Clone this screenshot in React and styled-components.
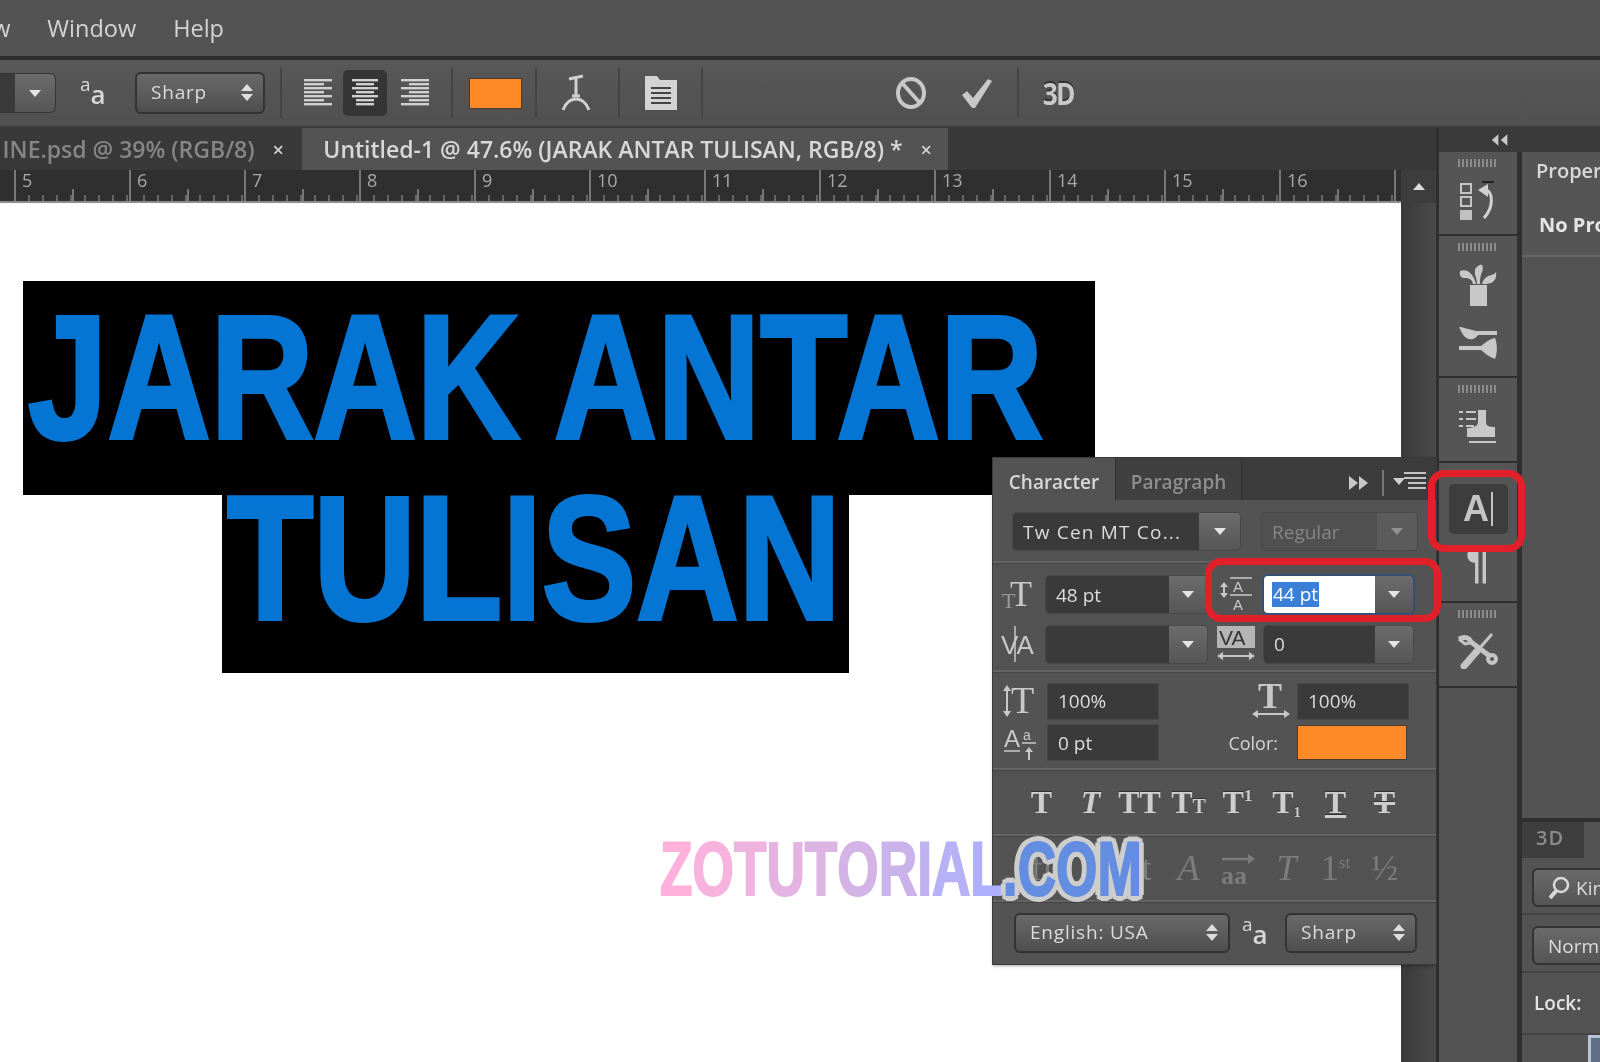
import React from 'react'
import styled, { createGlobalStyle } from 'styled-components'

const UI = `"Open Sans", "Noto Sans", sans-serif`
const SERIF = `"Liberation Serif", serif`

const Global = createGlobalStyle`
  html, body {
    margin: 0;
    padding: 0;
    background: #535353;
  }
  * { box-sizing: border-box; }
`

const Page = styled.div`
  position: relative;
  width: 1600px;
  height: 1062px;
  overflow: hidden;
  display: flex;
  flex-direction: column;
  background: #535353;
  font-family: ${UI};
  color: #d8d8d8;
  filter: blur(0.45px);
`

const MenuBar = styled.div`
  height: 60px;
  flex: none;
  display: flex;
  align-items: center;
  gap: 37px;
  padding: 0 0 1px 0;
  margin-left: -41px;
  border-bottom: 4px solid #2c2c2c;
  font-size: 23.5px;
  color: #d4d4d4;
`

const OptionsBar = styled.div`
  height: 68px;
  flex: none;
  display: flex;
  align-items: center;
  background: linear-gradient(#585858, #505050);
  border-bottom: 2px solid #3c3c3c;
`

const OptDivider = styled.div`
  width: 2px;
  height: 50px;
  flex: none;
  background: #444;
  margin-left: ${p => p.$ml || 0}px;
`

const FontStub = styled.div`
  width: 55px;
  height: 38px;
  flex: none;
  display: flex;
  border-radius: 0 5px 5px 0;
  overflow: hidden;
  box-shadow: 0 0 0 1px #363636;
  background: #3a3a3a;
  padding-left: 15px;
`

const Select = styled.div`
  width: ${p => p.$w}px;
  height: ${p => p.$h || 40}px;
  flex: none;
  margin-left: ${p => p.$ml || 0}px;
  display: flex;
  align-items: center;
  justify-content: space-between;
  padding: 0 10px 2px 14px;
  font-size: 19px;
  letter-spacing: 0.8px;
  color: #dcdcdc;
  border: 2px solid #333;
  border-radius: 6px;
  background: linear-gradient(#696969, #4f4f4f);
  white-space: nowrap;
  overflow: hidden;
`

const UpDown = styled.span`
  display: flex;
  flex-direction: column;
  gap: 3px;
  flex: none;
  &::before, &::after {
    content: '';
    border-left: 6px solid transparent;
    border-right: 6px solid transparent;
  }
  &::before { border-bottom: 7px solid #ddd; }
  &::after { border-top: 7px solid #ddd; }
`

const AaIcon = styled.span`
  flex: none;
  width: ${p => p.$w || 30}px;
  margin-left: ${p => p.$ml || 0}px;
  display: flex;
  font-family: ${UI};
  color: #d8d8d8;
  line-height: 1;
  span:first-child { font-size: 19px; margin-top: -4px; }
  span:last-child { font-size: 26px; margin-top: 2px; font-weight: 600; }
`

const AlignBtn = styled.div`
  width: 44px;
  height: 46px;
  flex: none;
  margin-left: ${p => p.$ml || 0}px;
  display: flex;
  align-items: center;
  justify-content: center;
  border-radius: 5px;
  background: ${p => (p.$on ? '#353535' : 'transparent')};
`

const Swatch = styled.div`
  width: ${p => p.$w}px;
  height: ${p => p.$h}px;
  flex: none;
  margin-left: ${p => p.$ml || 0}px;
  background: #ff8a27;
  box-shadow: 0 0 0 1px #4a3a2c;
`

const OptIcon = styled.div`
  flex: none;
  display: flex;
  margin-left: ${p => p.$ml || 0}px;
`

const ThreeD = styled.span`
  flex: none;
  margin-left: 21px;
  font-size: 31px;
  font-weight: 700;
  letter-spacing: -2px;
  color: #c8c8c8;
  text-shadow: 0 -2px 0 #333;
  transform: scaleX(0.85);
`

const Workspace = styled.div`
  flex: 1;
  min-height: 0;
  display: flex;
`

const Main = styled.div`
  width: 1439px;
  flex: none;
  display: flex;
  flex-direction: column;
  border-right: 3px solid #2f2f2f;
`

const TabBar = styled.div`
  height: 42px;
  flex: none;
  display: flex;
  background: #393939;
  font-size: 23px;
  font-weight: 600;
`

const Tab = styled.div`
  width: ${p => p.$w}px;
  flex: none;
  display: flex;
  align-items: center;
  justify-content: flex-end;
  gap: 18px;
  padding-right: ${p => p.$pr}px;
  overflow: hidden;
  white-space: nowrap;
  background: ${p => (p.$on ? '#535353' : '#393939')};
  color: ${p => (p.$on ? '#d8d8d8' : '#868686')};
`

const TabClose = styled.span`
  font-size: 20px;
  font-weight: 600;
  color: #d0d0d0;
`

const RulerRow = styled.div`
  height: 33px;
  flex: none;
  display: flex;
`

const Ruler = styled.div`
  flex: 1;
  display: flex;
  padding-left: 14px;
  background: #2f2f2f;
  overflow: hidden;
  border-bottom: 2px solid #8c8c8c;
`

const RulerCell = styled.div`
  width: 115px;
  flex: none;
  border-left: 2px solid #777;
  padding-left: 6px;
  font-size: 18px;
  line-height: 20px;
  color: #a8a8a8;
  background:
    linear-gradient(90deg, transparent 56px, #777 56px, #777 58px, transparent 58px) bottom left / 115px 12px no-repeat,
    repeating-linear-gradient(90deg, transparent 0 12px, #666 12px 14px) bottom left / 115px 6px no-repeat;
`

const ScrollHead = styled.div`
  width: 35px;
  flex: none;
  display: flex;
  justify-content: center;
  padding-top: 13px;
  background: #3d3d3d;
  &::before {
    content: '';
    height: 0;
    border-left: 6px solid transparent;
    border-right: 6px solid transparent;
    border-bottom: 7px solid #ddd;
  }
`

const CanvasRow = styled.div`
  flex: 1;
  min-height: 0;
  display: flex;
`

const Canvas = styled.div`
  position: relative;
  flex: 1;
  background: #fff;
`

const ScrollTrack = styled.div`
  width: 35px;
  flex: none;
  background: linear-gradient(90deg, #3a3a3a, #4a4a4a);
`

const Artwork = styled.div`
  position: absolute;
  left: 23px;
  top: 78px;
  display: flex;
  flex-direction: column;
  align-items: flex-start;
`

const ArtLine = styled.div`
  width: ${p => p.$w}px;
  height: ${p => p.$h}px;
  margin-left: ${p => p.$ml || 0}px;
  padding-left: ${p => p.$pl}px;
  background: #000;
  white-space: nowrap;
`

const ArtText = styled.span`
  display: inline-block;
  font-family: "Liberation Sans", sans-serif;
  font-weight: 700;
  font-size: 176px;
  line-height: ${p => p.$lh}px;
  color: #0575d4;
  -webkit-text-stroke: 4px #0575d4;
  transform: scaleX(${p => p.$sx});
  transform-origin: left center;
`

const Dock = styled.div`
  flex: 1;
  min-width: 0;
  display: flex;
  flex-direction: column;
  background: #2f2f2f;
`

const DockHead = styled.div`
  height: 24px;
  flex: none;
  display: flex;
  justify-content: flex-start;
  align-items: center;
  padding-left: 52px;
  background: #3a3a3a;
`

const DockBody = styled.div`
  flex: 1;
  min-height: 0;
  display: flex;
`

const IconColumn = styled.div`
  width: 78px;
  flex: none;
  display: flex;
  flex-direction: column;
  gap: 2px;
  background: #535353;
`

const IconGroup = styled.div`
  height: ${p => p.$h}px;
  flex: none;
  display: flex;
  flex-direction: column;
  align-items: center;
  padding-top: 7px;
  background: #555;
  box-shadow: 0 2px 0 #2f2f2f;
`

const Grip = styled.div`
  width: 40px;
  height: 8px;
  flex: none;
  margin-bottom: ${p => p.$mb}px;
  background: repeating-linear-gradient(90deg, #8a8a8a 0 2px, transparent 2px 4px);
`

const DockGlyph = styled.div`
  flex: none;
  display: flex;
  margin-top: ${p => p.$mt || 0}px;
`

const ActiveBtn = styled.div`
  width: 59px;
  height: 50px;
  flex: none;
  margin-top: 14px;
  display: flex;
  align-items: center;
  justify-content: center;
  gap: 2px;
  border-radius: 5px;
  background: #3d3d3d;
  color: #c4c4c4;
  font-family: "Liberation Sans", sans-serif;
  font-size: 36px;
  font-weight: 700;
  line-height: 1;
  i {
    display: block;
    width: 2px;
    height: 34px;
    background: #c4c4c4;
  }
`

const Pilcrow = styled.div`
  flex: none;
  margin-top: 7px;
  font-family: "Liberation Sans", sans-serif;
  font-weight: 700;
  font-size: 44px;
  line-height: 44px;
  color: #c8c8c8;
`

const Stack = styled.div`
  margin-left: 5px;
  flex: 1;
  min-width: 0;
  display: flex;
  flex-direction: column;
  overflow: hidden;
  background: #2f2f2f;
`

const PropHead = styled.div`
  height: 105px;
  flex: none;
  padding: 5px 0 0 14px;
  border-bottom: 2px solid #666;
  background: #555;
  white-space: nowrap;
  font-size: 20px;
  font-weight: 600;
  color: #d8d8d8;
  strong {
    display: block;
    margin: 27px 0 0 3px;
    font-weight: 700;
    color: #e4e4e4;
  }
`

const PropBody = styled.div`
  height: 565px;
  flex: none;
  background: #535353;
  border-bottom: 4px solid #2f2f2f;
`

const SmallTabs = styled.div`
  height: 36px;
  flex: none;
  display: flex;
  background: #535353;
  font-size: 20px;
  font-weight: 600;
  color: #8c8c8c;
`

const SmallTab = styled.div`
  width: 62px;
  flex: none;
  padding: 2px 0 0 14px;
  background: #3e3e3e;
  letter-spacing: 1px;
`

const StackRow = styled.div`
  height: ${p => p.$h}px;
  flex: none;
  display: flex;
  padding: ${p => p.$pt || 0}px 0 0 10px;
  background: #535353;
  border-bottom: 2px solid #444;
  font-size: 19px;
  white-space: nowrap;
`

const StackSelect = styled.div`
  width: 90px;
  height: 39px;
  flex: none;
  display: flex;
  align-items: center;
  gap: 6px;
  padding-left: 14px;
  border: 2px solid #333;
  border-radius: 6px 0 0 6px;
  background: linear-gradient(#6a6a6a, #555);
  color: #dcdcdc;
`

const LockLabel = styled.span`
  font-weight: 600;
  padding: 17px 0 0 2px;
  color: #e4e4e4;
`

const LockBox = styled.div`
  height: 27px;
  flex: none;
  background: #535353;
  padding-left: 66px;
  &::before {
    content: '';
    display: block;
    width: 20px;
    height: 27px;
    border: 3px solid #b8c4d4;
    background: #5f6f85;
  }
`

/* floating character panel */
const CharPanel = styled.div`
  position: absolute;
  left: 993px;
  top: 458px;
  width: 443px;
  height: 506px;
  display: flex;
  flex-direction: column;
  background: #535353;
  box-shadow: 0 0 0 1px #3a3a3a, 0 2px 3px rgba(0, 0, 0, 0.35);
  font-size: 19px;
`

const PanelHead = styled.div`
  height: 42px;
  flex: none;
  display: flex;
  align-items: stretch;
  background: #3c3c3c;
  font-size: 19px;
  font-weight: 600;
`

const PanelTab = styled.div`
  width: ${p => p.$w}px;
  flex: none;
  display: flex;
  align-items: center;
  justify-content: center;
  padding-top: 6px;
  background: ${p => (p.$on ? '#535353' : '#404040')};
  color: ${p => (p.$on ? '#d8d8d8' : '#8e8e8e')};
  border-right: 1px solid #2f2f2f;
`

const PanelControls = styled.div`
  margin-left: auto;
  display: flex;
  align-items: center;
  padding: 8px 0 0 0;
  margin-right: -2px;
`

const Section = styled.div`
  flex: none;
  height: ${p => p.$h}px;
  border-bottom: ${p => (p.$last ? 'none' : '2px solid #646464')};
  box-shadow: ${p => (p.$last ? 'none' : '0 1px 0 #454545')};
`

const FontRow = styled.div`
  display: flex;
  gap: 22px;
  padding: 13px 0 0 20px;
`

const Combo = styled.div`
  width: ${p => p.$w}px;
  height: ${p => p.$h || 37}px;
  flex: none;
  display: flex;
  border-radius: 4px;
  overflow: hidden;
  box-shadow: ${p => (p.$focus ? '0 0 0 2px #34507a' : '0 0 0 1px #484848')};
`

const ComboField = styled.div`
  flex: 1;
  min-width: 0;
  display: flex;
  align-items: center;
  padding-left: ${p => p.$pl || 10}px;
  background: ${p => (p.$white ? '#fff' : p.$dim ? '#505050' : '#3a3a3a')};
  color: ${p => (p.$dim ? '#868686' : '#dcdcdc')};
  letter-spacing: ${p => p.$ls || 0}px;
  white-space: nowrap;
`

const ComboBtn = styled.div`
  width: ${p => p.$w || 38}px;
  flex: none;
  display: flex;
  align-items: center;
  justify-content: center;
  background: ${p => (p.$dim ? '#5b5b5b' : 'linear-gradient(#6c6c6c, #565656)')};
  &::before {
    content: '';
    border-left: 6px solid transparent;
    border-right: 6px solid transparent;
    border-top: 7px solid ${p => (p.$dim ? '#909090' : '#e4e4e4')};
  }
`

const Selected = styled.span`
  background: #3a80d8;
  color: #fff;
  padding: 0 1px;
  line-height: 25px;
`

const MetricRows = styled.div`
  display: flex;
  flex-direction: column;
  gap: 12px;
  padding-top: 13px;
`

const MetricRow = styled.div`
  display: grid;
  grid-template-columns: 53px 161px 57px 149px;
  align-items: center;
  height: 37px;
`

const RowIcon = styled.div`
  display: flex;
  justify-content: ${p => p.$end ? 'flex-end' : 'center'};
  align-items: center;
  padding-right: ${p => p.$pr || 0}px;
`

const ScaleRows = styled.div`
  display: flex;
  flex-direction: column;
  gap: 7px;
  padding-top: 11px;
`

const ScaleRow = styled.div`
  display: grid;
  grid-template-columns: 55px 110px 140px 110px;
  align-items: center;
  height: 35px;
`

const PlainField = styled.div`
  height: 35px;
  display: flex;
  align-items: center;
  padding-left: 10px;
  background: #3a3a3a;
  color: #dcdcdc;
  box-shadow: 0 0 0 1px #484848;
`

const ColorLabel = styled.div`
  justify-content: flex-end;
  display: flex;
  padding-right: 20px;
  color: #d4d4d4;
  font-size: 18px;
`

const GlyphRow = styled.div`
  display: grid;
  grid-template-columns: repeat(8, 49px);
  align-items: center;
  height: 64px;
  padding-left: 24px;
`

const Glyph = styled.div`
  text-align: center;
  font-family: ${SERIF};
  font-weight: ${p => (p.$dim ? 400 : 700)};
  font-style: ${p => (p.$italic ? 'italic' : 'normal')};
  font-size: ${p => (p.$dim ? 36 : 32)}px;
  line-height: 1;
  color: ${p => (p.$dim ? '#7c7c7c' : '#cecece')};
  text-shadow: ${p => (p.$dim ? 'none' : '0 -1px 0 #333')};
  text-decoration: ${p => p.$deco || 'none'};
  small { font-size: ${p => p.$small || 20}px; }
  sup { font-size: 17px; line-height: 0; vertical-align: 12px; }
  sub { font-size: 14px; line-height: 0; vertical-align: -4px; }
`

const LangRow = styled.div`
  display: flex;
  align-items: center;
  padding: 11px 0 0 21px;
`

const Highlight = styled.div`
  position: absolute;
  left: ${p => p.$x}px;
  top: ${p => p.$y}px;
  width: ${p => p.$w}px;
  height: ${p => p.$h}px;
  border: 7px solid #e2202a;
  border-radius: 16px;
`

const Watermark = styled.div`
  position: absolute;
  left: 660px;
  top: 827px;
  display: flex;
  white-space: nowrap;
  font-family: "Liberation Sans", sans-serif;
  font-weight: 700;
  font-size: 76px;
  line-height: 84px;
  transform: scaleX(0.7);
  transform-origin: left top;
`

const MarkLetter = styled.span`
  color: ${p => p.$c};
  -webkit-text-stroke: 2px ${p => p.$c};
`

const MarkEnd = styled.span`
  color: #638de0;
  -webkit-text-stroke: 2px #638de0;
  text-shadow:
    8px 0 0 #cdcdcd, -8px 0 0 #cdcdcd, 0 6px 0 #cdcdcd, 0 -6px 0 #cdcdcd,
    6px 4px 0 #cdcdcd, -6px 4px 0 #cdcdcd, 6px -4px 0 #cdcdcd, -6px -4px 0 #cdcdcd,
    3px 5px 0 #cdcdcd, -3px 5px 0 #cdcdcd, 3px -5px 0 #cdcdcd, -3px -5px 0 #cdcdcd;
`

const AlignIcon = ({ widths, x }) => (
  <svg width="30" height="30" viewBox="0 0 30 30">
    {widths.map((w, i) => (
      <rect key={i} x={x(w)} y={1 + i * 4} width={w} height="2.4" fill="#d0d0d0" />
    ))}
  </svg>
)

const WarpIcon = () => (
  <svg width="30" height="38" viewBox="0 0 30 38" fill="none" stroke="#d0d0d0">
    <path d="M8 5l14-3M15 4v18M11 22h8" strokeWidth="3" />
    <path d="M2 36c3-8 8-11 13-11s10 3 13 11" strokeWidth="3" />
  </svg>
)

const NotesIcon = () => (
  <svg width="34" height="36" viewBox="0 0 34 36">
    <path d="M1 1h12l3 4h17v30H1z" fill="#d4d4d4" />
    <path d="M7 13h20M7 18h20M7 23h20M7 28h20" stroke="#444" strokeWidth="2" />
  </svg>
)

const CancelIcon = () => (
  <svg width="32" height="34" viewBox="0 0 32 34" fill="none" stroke="#c8c8c8" strokeWidth="4">
    <ellipse cx="16" cy="17" rx="13" ry="14" />
    <path d="M7 7l18 20" />
  </svg>
)

const CheckIcon = () => (
  <svg width="32" height="30" viewBox="0 0 32 30">
    <path d="M1 17l5-4 6 7L27 1l4 2-17 27h-3z" fill="#c8c8c8" />
  </svg>
)

const CollapseIcon = ({ dir }) => (
  <svg width={dir === 'left' ? 18 : 22} height="16" viewBox="0 0 22 16" fill="#c8c8c8">
    {dir === 'left'
      ? <path d="M1 8l8-7v14zM12 8l8-7v14z" />
      : <path d="M1 1l9 7-9 7zM11 1l9 7-9 7z" />}
  </svg>
)

const HistoryIcon = () => (
  <svg width="38" height="40" viewBox="0 0 38 40">
    <path d="M2 3h10v9H2zM2 16h10v9H2z" fill="none" stroke="#c4c4c4" strokeWidth="2" />
    <rect x="1" y="29" width="12" height="10" fill="#c0c0c0" />
    <path d="M23 1h12" stroke="#222" strokeWidth="2" />
    <path d="M19 9l10-6v13z" fill="#d0d0d0" />
    <path d="M27 9c7 2 8 17-2 28" fill="none" stroke="#d0d0d0" strokeWidth="3" />
  </svg>
)

const BrushPotIcon = () => (
  <svg width="38" height="42" viewBox="0 0 38 42" fill="#c8c8c8">
    <rect x="11" y="21" width="17" height="21" />
    <path d="M14 20c-1-5-4-6-9-6-3 0-5-3-4-7 5-2 9 0 12 4 2 3 3 5 4 9zM18 20c0-6-3-9-2-14 1-4 6-6 7-5 2 4 0 6-1 10-1 3-1 6-1 9zM23 20c1-4 3-6 6-8 3-1 6-1 8-4 1 5-1 9-5 11-3 1-6 1-9 1z" />
  </svg>
)

const BrushPresetIcon = () => (
  <svg width="40" height="34" viewBox="0 0 40 34" fill="#c8c8c8">
    <path d="M1 1c4 0 8 2 13 3 3 1 5 1 8 1h17v4H20c-2 3-5 5-9 4C6 12 4 7 1 1z" />
    <path d="M1 20h22v4H1zM23 20c4-3 8-7 14-8 2 4 3 14 0 21-6-2-10-6-14-9z" />
  </svg>
)

const StampIcon = () => (
  <svg width="40" height="36" viewBox="0 0 40 36" fill="#c8c8c8">
    <path d="M1 2h4v2H1zM8 2h10v2H8zM1 9h4v2H1zM8 9h10v2H8zM1 16h4v2H1zM8 16h8v2H8z" />
    <path d="M20 1h8v12c0 4 3 5 9 5v10H9v-9c6 0 11-2 11-6z" />
    <rect x="11" y="32" width="27" height="2" />
  </svg>
)

const ToolsIcon = () => (
  <svg width="40" height="38" viewBox="0 0 40 38" fill="none" stroke="#c4c4c4">
    <path d="M34 3L20 19" strokeWidth="3" />
    <path d="M20 19L6 35" strokeWidth="7" strokeLinecap="round" />
    <path d="M1 8c4-2 7-2 10 0l2 3 20 15" strokeWidth="5" />
    <circle cx="34" cy="28" r="4" strokeWidth="4" />
    <path d="M1 8l6 5 5-1" strokeWidth="3" />
  </svg>
)

const SearchIcon = () => (
  <svg width="22" height="24" viewBox="0 0 22 24" fill="none" stroke="#d8d8d8" strokeWidth="2.5">
    <circle cx="13" cy="9" r="7" />
    <path d="M8 15l-6 7" strokeWidth="4" />
  </svg>
)

const serifT = { fontFamily: SERIF, fill: '#c8c8c8' }

const SizeIcon = () => (
  <svg width="36" height="32" viewBox="0 0 36 32">
    <text x="0" y="29" fontSize="22" style={{ fontFamily: SERIF, fill: '#999' }}>T</text>
    <text x="8" y="27" fontSize="36" style={serifT}>T</text>
  </svg>
)

const LeadingIcon = () => (
  <svg width="34" height="36" viewBox="0 0 34 36" fill="#c8c8c8">
    <path d="M11 1h22" stroke="#c8c8c8" strokeWidth="1.5" />
    <text x="14" y="15" fontSize="15" fontFamily="Liberation Sans">A</text>
    <path d="M11 18h22" stroke="#c8c8c8" strokeWidth="1.5" />
    <text x="14" y="33" fontSize="15" fontFamily="Liberation Sans">A</text>
    <path d="M5 5l4 5H1zM5 21l4-5H1z" />
    <path d="M4 9h2v8H4z" />
  </svg>
)

const KernIcon = () => (
  <svg width="38" height="38" viewBox="0 0 38 38" fill="#c8c8c8">
    <text x="0" y="29" fontSize="26" fontFamily="Liberation Sans">VA</text>
    <path d="M14 1v36" stroke="#c8c8c8" strokeWidth="1.5" />
  </svg>
)

const TrackIcon = () => (
  <svg width="38" height="36" viewBox="0 0 38 36">
    <rect x="0" y="0" width="38" height="22" fill="#b4b4b4" />
    <text x="2" y="19" fontSize="21" fontFamily="Liberation Sans" fill="#333">VA</text>
    <path d="M4 30h30" stroke="#c8c8c8" strokeWidth="2" />
    <path d="M0 30l6-4v8zM38 30l-6-4v8z" fill="#c8c8c8" />
  </svg>
)

const VScaleIcon = () => (
  <svg width="36" height="34" viewBox="0 0 36 34" fill="#c8c8c8">
    <text x="8" y="29" fontSize="38" fontFamily="Liberation Serif">T</text>
    <path d="M4 5v24" stroke="#c8c8c8" strokeWidth="2" />
    <path d="M4 1l4 6H0zM4 33l4-6H0z" />
  </svg>
)

const HScaleIcon = () => (
  <svg width="38" height="36" viewBox="0 0 38 36" fill="#c8c8c8">
    <text x="6" y="25" fontSize="36" fontWeight="700" fontFamily="Liberation Serif">T</text>
    <path d="M5 31h28" stroke="#c8c8c8" strokeWidth="2" />
    <path d="M0 31l6-4v8zM38 31l-6-4v8z" />
  </svg>
)

const BaselineIcon = () => (
  <svg width="34" height="34" viewBox="0 0 34 34" fill="#c8c8c8">
    <text x="0" y="21" fontSize="24" fontFamily="Liberation Sans">A</text>
    <text x="19" y="14" fontSize="14" fontFamily="Liberation Sans">a</text>
    <path d="M0 25h16M18 17h14" stroke="#c8c8c8" strokeWidth="1.5" />
    <path d="M25 21l4 5h-3v8h-2v-8h-3z" />
  </svg>
)

const TitlingIcon = () => (
  <svg width="36" height="34" viewBox="0 0 36 34" fill="#7c7c7c" style={{ verticalAlign: 'middle' }}>
    <path d="M2 6h30" stroke="#7c7c7c" strokeWidth="2.5" />
    <path d="M35 6l-7-5v10z" />
    <text x="1" y="31" fontSize="26" fontFamily="Liberation Serif" fontWeight="700">aa</text>
  </svg>
)

const Aa = props => (
  <AaIcon {...props}>
    <span>a</span>
    <span>a</span>
  </AaIcon>
)

const RULER = [5, 6, 7, 8, 9, 10, 11, 12, 13, 14, 15, 16]
const ALIGN = [28, 20, 28, 20, 28, 20, 28]
const ALIGN_C = [26, 18, 26, 18, 26, 18, 18]
const MARK = [
  ['Z', '#ffb1dc'], ['O', '#f7b2dd'], ['T', '#eeb3df'], ['U', '#e5b3e1'], ['T', '#dcb4e3'],
  ['O', '#d4b4e6'], ['R', '#cab3ea'], ['I', '#c0b2ee'], ['A', '#b7b1f5'], ['L', '#aeb0ff'],
]

const App = () => (
  <Page>
    <Global />
    <MenuBar>
      <span>View</span>
      <span>Window</span>
      <span>Help</span>
    </MenuBar>

    <OptionsBar>
      <FontStub><ComboBtn $w={40} /></FontStub>
      <Aa $ml={25} $w={30} />
      <Select $w={130} $ml={25} $h={42}>Sharp<UpDown /></Select>
      <OptDivider $ml={15} />
      <AlignBtn $ml={14}><AlignIcon widths={ALIGN} x={() => 1} /></AlignBtn>
      <AlignBtn $on $ml={3}><AlignIcon widths={ALIGN_C} x={w => (30 - w) / 2} /></AlignBtn>
      <AlignBtn $ml={6}><AlignIcon widths={ALIGN} x={w => 29 - w} /></AlignBtn>
      <OptDivider $ml={14} />
      <Swatch $w={51} $h={29} $ml={17} />
      <OptDivider $ml={14} />
      <OptIcon $ml={24}><WarpIcon /></OptIcon>
      <OptDivider $ml={27} />
      <OptIcon $ml={24}><NotesIcon /></OptIcon>
      <OptDivider $ml={23} />
      <OptIcon $ml={192}><CancelIcon /></OptIcon>
      <OptIcon $ml={34}><CheckIcon /></OptIcon>
      <OptDivider $ml={24} />
      <ThreeD>3D</ThreeD>
    </OptionsBar>

    <Workspace>
      <Main>
        <TabBar>
          <Tab $w={302} $pr={18}>
            <span>INE.psd @ 39% (RGB/8)</span>
            <TabClose>×</TabClose>
          </Tab>
          <Tab $on $w={646} $pr={16}>
            <span>Untitled-1 @ 47.6% (JARAK ANTAR TULISAN, RGB/8) *</span>
            <TabClose>×</TabClose>
          </Tab>
        </TabBar>
        <RulerRow>
          <Ruler>
            {RULER.map(n => <RulerCell key={n}>{n}</RulerCell>)}
            <RulerCell />
          </Ruler>
          <ScrollHead />
        </RulerRow>
        <CanvasRow>
          <Canvas>
            <Artwork>
              <ArtLine $w={1072} $h={214} $pl={5}>
                <ArtText $sx={0.811} $lh={192}>JARAK ANTAR</ArtText>
              </ArtLine>
              <ArtLine $w={627} $h={178} $ml={199} $pl={5}>
                <ArtText $sx={0.805} $lh={126}>TULISAN</ArtText>
              </ArtLine>
            </Artwork>
          </Canvas>
          <ScrollTrack />
        </CanvasRow>
      </Main>

      <Dock>
        <DockHead><CollapseIcon dir="left" /></DockHead>
        <DockBody>
          <IconColumn>
            <IconGroup $h={82}>
              <Grip $mb={14} />
              <DockGlyph><HistoryIcon /></DockGlyph>
            </IconGroup>
            <IconGroup $h={140}>
              <Grip $mb={13} />
              <DockGlyph><BrushPotIcon /></DockGlyph>
              <DockGlyph $mt={20}><BrushPresetIcon /></DockGlyph>
            </IconGroup>
            <IconGroup $h={83}>
              <Grip $mb={16} />
              <DockGlyph><StampIcon /></DockGlyph>
            </IconGroup>
            <IconGroup $h={138}>
              <ActiveBtn>A<i /></ActiveBtn>
              <Pilcrow>¶</Pilcrow>
            </IconGroup>
            <IconGroup $h={83}>
              <Grip $mb={13} />
              <DockGlyph><ToolsIcon /></DockGlyph>
            </IconGroup>
          </IconColumn>
          <Stack>
            <PropHead>
              Properties
              <strong>No Properties</strong>
            </PropHead>
            <PropBody />
            <SmallTabs>
              <SmallTab>3D</SmallTab>
            </SmallTabs>
            <StackRow $h={57} $pt={10}>
              <StackSelect><SearchIcon />Kind</StackSelect>
            </StackRow>
            <StackRow $h={58} $pt={11}>
              <StackSelect>Normal</StackSelect>
            </StackRow>
            <StackRow $h={62}>
              <LockLabel>Lock:</LockLabel>
            </StackRow>
            <LockBox />
          </Stack>
        </DockBody>
      </Dock>
    </Workspace>

    <CharPanel>
      <PanelHead>
        <PanelTab $on $w={123}>Character</PanelTab>
        <PanelTab $w={126}>Paragraph</PanelTab>
        <PanelControls>
          <CollapseIcon />
          <svg width="58" height="26" viewBox="0 0 58 26" style={{ marginLeft: 10 }}>
            <path d="M3 0v26" stroke="#777" strokeWidth="2" />
            <path d="M13 8h12l-6 7z" fill="#d0d0d0" />
            <path d="M24 3h22M24 8h22M28 13h18M28 18h18" stroke="#c4c4c4" strokeWidth="2" />
          </svg>
        </PanelControls>
      </PanelHead>

      <Section $h={63}>
        <FontRow>
          <Combo $w={227}>
            <ComboField $pl={10} $ls={1.2}>Tw Cen MT Co...</ComboField>
            <ComboBtn $w={41} />
          </Combo>
          <Combo $w={155}>
            <ComboField $dim>Regular</ComboField>
            <ComboBtn $dim $w={40} />
          </Combo>
        </FontRow>
      </Section>

      <Section $h={109}>
        <MetricRows>
          <MetricRow>
            <RowIcon><SizeIcon /></RowIcon>
            <Combo $w={161}>
              <ComboField>48 pt</ComboField>
              <ComboBtn />
            </Combo>
            <RowIcon><LeadingIcon /></RowIcon>
            <Combo $w={149} $focus>
              <ComboField $white $pl={8}><Selected>44 pt</Selected></ComboField>
              <ComboBtn />
            </Combo>
          </MetricRow>
          <MetricRow>
            <RowIcon><KernIcon /></RowIcon>
            <Combo $w={161}>
              <ComboField />
              <ComboBtn />
            </Combo>
            <RowIcon><TrackIcon /></RowIcon>
            <Combo $w={149}>
              <ComboField>0</ComboField>
              <ComboBtn />
            </Combo>
          </MetricRow>
        </MetricRows>
      </Section>

      <Section $h={98}>
        <ScaleRows>
          <ScaleRow>
            <RowIcon><VScaleIcon /></RowIcon>
            <PlainField>100%</PlainField>
            <RowIcon $end $pr={8}><HScaleIcon /></RowIcon>
            <PlainField>100%</PlainField>
          </ScaleRow>
          <ScaleRow>
            <RowIcon><BaselineIcon /></RowIcon>
            <PlainField>0 pt</PlainField>
            <ColorLabel>Color:</ColorLabel>
            <Swatch $w={108} $h={33} />
          </ScaleRow>
        </ScaleRows>
      </Section>

      <Section $h={66}>
        <GlyphRow>
          <Glyph>T</Glyph>
          <Glyph $italic>T</Glyph>
          <Glyph>TT</Glyph>
          <Glyph>T<small>T</small></Glyph>
          <Glyph>T<sup>1</sup></Glyph>
          <Glyph>T<sub>1</sub></Glyph>
          <Glyph $deco="underline">T</Glyph>
          <Glyph $deco="line-through">T</Glyph>
        </GlyphRow>
      </Section>

      <Section $h={66}>
        <GlyphRow>
          <Glyph $dim>fi</Glyph>
          <Glyph $dim $italic>o</Glyph>
          <Glyph $dim>st</Glyph>
          <Glyph $dim $italic>A</Glyph>
          <Glyph $dim><TitlingIcon /></Glyph>
          <Glyph $dim $italic>T</Glyph>
          <Glyph $dim>1<sup>st</sup></Glyph>
          <Glyph $dim>½</Glyph>
        </GlyphRow>
      </Section>

      <Section $h={62} $last>
        <LangRow>
          <Select $w={216}>English: USA<UpDown /></Select>
          <Aa $ml={12} $w={30} />
          <Select $w={132} $ml={13}>Sharp<UpDown /></Select>
        </LangRow>
      </Section>
    </CharPanel>

    <Highlight $x={1205} $y={558} $w={236} $h={64} />
    <Highlight $x={1428} $y={470} $w={97} $h={82} />

    <Watermark>
      {MARK.map(([ch, c], i) => <MarkLetter key={i} $c={c}>{ch}</MarkLetter>)}
      <MarkEnd>.COM</MarkEnd>
    </Watermark>
  </Page>
)

export default App
